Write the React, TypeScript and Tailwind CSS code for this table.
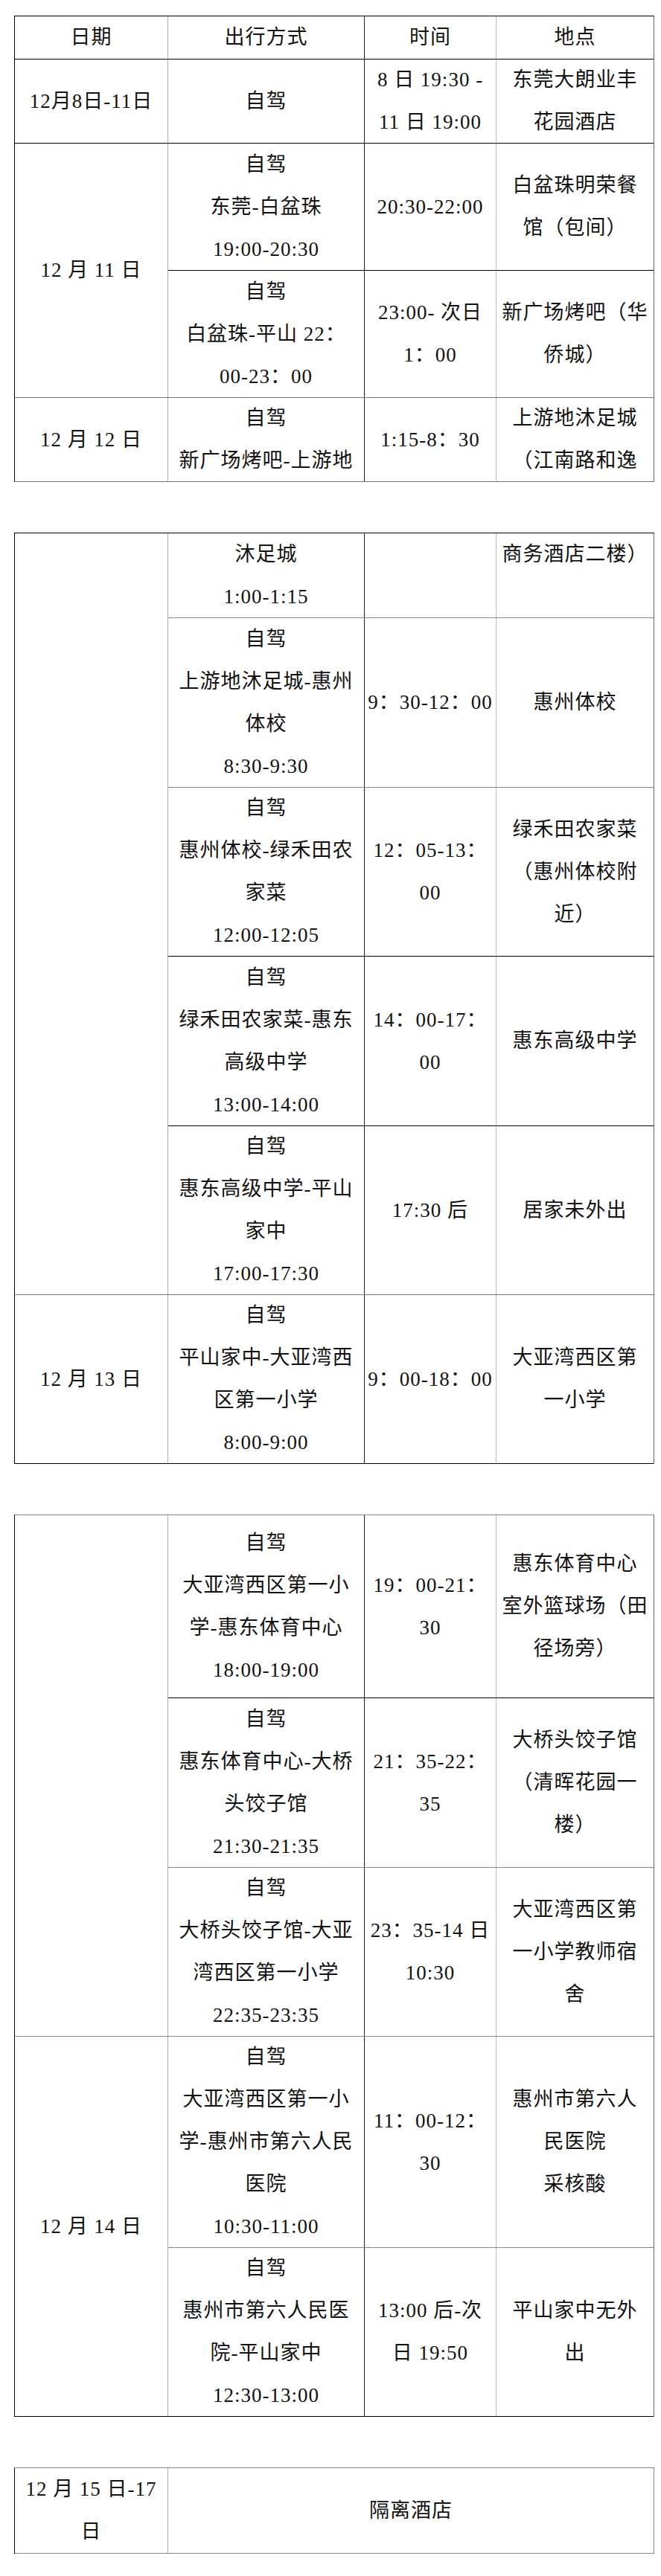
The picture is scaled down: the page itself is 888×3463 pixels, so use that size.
type Sub = {
  h: string;
  line?: string;
  mode?: string[];
  time?: string[];
  place?: string[];
  merged?: string;
};

type Group = {
  date: string[];
  line: string;
  subs: Sub[];
};

type Sheet = {
  mt: string;
  top: string;
  edge: string;
  groups: Group[];
};

const sheets: Sheet[] = [
  {
    mt: "mt-[21px]",
    top: "border-t-black",
    edge: "border-r-[#666]",
    groups: [
      {
        date: ["日期"],
        line: "border-b-black",
        subs: [{ h: "h-[57px]", mode: ["出行方式"], time: ["时间"], place: ["地点"] }],
      },
      {
        date: ["12月8日-11日"],
        line: "border-b-black",
        subs: [
          {
            h: "h-[112px]",
            mode: ["自驾"],
            time: ["8 日 19:30 -", "11 日 19:00"],
            place: ["东莞大朗业丰", "花园酒店"],
          },
        ],
      },
      {
        date: ["12 月 11 日"],
        line: "border-b-[#777]",
        subs: [
          {
            h: "h-[171px]",
            line: "border-b-black",
            mode: ["自驾", "东莞-白盆珠", "19:00-20:30"],
            time: ["20:30-22:00"],
            place: ["白盆珠明荣餐", "馆（包间）"],
          },
          {
            h: "h-[170px]",
            mode: ["自驾", "白盆珠-平山 22：", "00-23：00"],
            time: ["23:00- 次日", "1：00"],
            place: ["新广场烤吧（华", "侨城）"],
          },
        ],
      },
      {
        date: ["12 月 12 日"],
        line: "border-b-[#777]",
        subs: [
          {
            h: "h-[112px]",
            mode: ["自驾", "新广场烤吧-上游地"],
            time: ["1:15-8：30"],
            place: ["上游地沐足城", "（江南路和逸"],
          },
        ],
      },
    ],
  },
  {
    mt: "mt-[68px]",
    top: "border-t-black",
    edge: "border-r-[#666]",
    groups: [
      {
        date: [""],
        line: "border-b-[#777]",
        subs: [
          {
            h: "h-[114px]",
            line: "border-b-[#888]",
            mode: ["沐足城", "1:00-1:15"],
            time: [""],
            place: ["商务酒店二楼）", ""],
          },
          {
            h: "h-[228px]",
            line: "border-b-[#888]",
            mode: ["自驾", "上游地沐足城-惠州", "体校", "8:30-9:30"],
            time: ["9：30-12：00"],
            place: ["惠州体校"],
          },
          {
            h: "h-[227px]",
            line: "border-b-black",
            mode: ["自驾", "惠州体校-绿禾田农", "家菜", "12:00-12:05"],
            time: ["12：05-13：", "00"],
            place: ["绿禾田农家菜", "（惠州体校附", "近）"],
          },
          {
            h: "h-[228px]",
            line: "border-b-black",
            mode: ["自驾", "绿禾田农家菜-惠东", "高级中学", "13:00-14:00"],
            time: ["14：00-17：", "00"],
            place: ["惠东高级中学"],
          },
          {
            h: "h-[226px]",
            mode: ["自驾", "惠东高级中学-平山", "家中", "17:00-17:30"],
            time: ["17:30 后"],
            place: ["居家未外出"],
          },
        ],
      },
      {
        date: ["12 月 13 日"],
        line: "border-b-black",
        subs: [
          {
            h: "h-[226px]",
            mode: ["自驾", "平山家中-大亚湾西", "区第一小学", "8:00-9:00"],
            time: ["9：00-18：00"],
            place: ["大亚湾西区第", "一小学"],
          },
        ],
      },
    ],
  },
  {
    mt: "mt-[68px]",
    top: "border-t-[#888]",
    edge: "border-r-[#666]",
    groups: [
      {
        date: [""],
        line: "border-b-[#888]",
        subs: [
          {
            h: "h-[246px]",
            line: "border-b-black",
            mode: ["自驾", "大亚湾西区第一小", "学-惠东体育中心", "18:00-19:00"],
            time: ["19：00-21：", "30"],
            place: ["惠东体育中心", "室外篮球场（田", "径场旁）"],
          },
          {
            h: "h-[228px]",
            line: "border-b-[#888]",
            mode: ["自驾", "惠东体育中心-大桥", "头饺子馆", "21:30-21:35"],
            time: ["21：35-22：", "35"],
            place: ["大桥头饺子馆", "（清晖花园一", "楼）"],
          },
          {
            h: "h-[226px]",
            mode: ["自驾", "大桥头饺子馆-大亚", "湾西区第一小学", "22:35-23:35"],
            time: ["23：35-14 日", "10:30"],
            place: ["大亚湾西区第", "一小学教师宿", "舍"],
          },
        ],
      },
      {
        date: ["12 月 14 日"],
        line: "border-b-black",
        subs: [
          {
            h: "h-[284px]",
            line: "border-b-[#888]",
            mode: ["自驾", "大亚湾西区第一小", "学-惠州市第六人民", "医院", "10:30-11:00"],
            time: ["11：00-12：", "30"],
            place: ["惠州市第六人", "民医院", "采核酸"],
          },
          {
            h: "h-[226px]",
            mode: ["自驾", "惠州市第六人民医", "院-平山家中", "12:30-13:00"],
            time: ["13:00 后-次", "日 19:50"],
            place: ["平山家中无外", "出"],
          },
        ],
      },
    ],
  },
  {
    mt: "mt-[68px]",
    top: "border-t-[#888]",
    edge: "border-r-[#888]",
    groups: [
      {
        date: ["12 月 15 日-17", "日"],
        line: "border-b-[#888]",
        subs: [{ h: "h-[114px]", merged: "隔离酒店" }],
      },
    ],
  },
];

function Lines({ lines }: { lines: string[] }) {
  return (
    <div className="flex flex-col items-center">
      {lines.map((l, i) => (
        <div key={i} className="whitespace-pre">
          {l || "\u00a0"}
        </div>
      ))}
    </div>
  );
}

export default function App() {
  return (
    <div className="min-h-[3463px] w-[888px] bg-white pb-[30px] font-['Liberation_Serif','Noto_Sans_CJK_SC',serif] text-[27px] leading-[57px] tracking-[1px] text-[#111]">
      {sheets.map((sheet, si) => (
        <div
          key={si}
          className={`ml-[19px] w-[860px] border-t border-r border-l-[1.5px] border-l-black ${sheet.mt} ${sheet.top} ${sheet.edge}`}
        >
          {sheet.groups.map((g, gi) => (
            <div key={gi} className={`flex border-b ${g.line}`}>
              <div className="flex w-[206px] shrink-0 items-center justify-center border-r border-r-[#aaa] text-center">
                <Lines lines={g.date} />
              </div>
              <div className="flex flex-1 flex-col">
                {g.subs.map((s, i) => {
                  const last = i === g.subs.length - 1;
                  return (
                    <div
                      key={i}
                      className={`flex ${s.h} ${last ? "" : "border-b"} ${last ? "" : s.line ?? ""}`}
                    >
                      {s.merged ? (
                        <div className="flex flex-1 items-center justify-center">{s.merged}</div>
                      ) : (
                        <>
                          <div className="flex w-[264px] shrink-0 items-center justify-center border-r border-r-[#222] text-center">
                            <Lines lines={s.mode ?? []} />
                          </div>
                          <div className="flex w-[177px] shrink-0 items-center justify-center border-r border-r-[#bbb] text-center">
                            <Lines lines={s.time ?? []} />
                          </div>
                          <div className="flex flex-1 items-center justify-center text-center">
                            <Lines lines={s.place ?? []} />
                          </div>
                        </>
                      )}
                    </div>
                  );
                })}
              </div>
            </div>
          ))}
        </div>
      ))}
    </div>
  );
}
